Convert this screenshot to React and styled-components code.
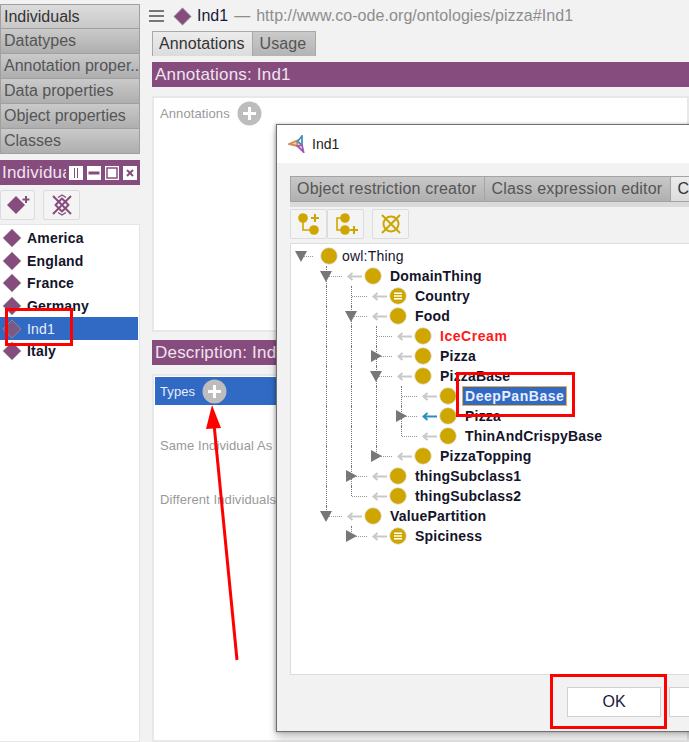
import styled, { createGlobalStyle } from 'styled-components';

const PURPLE = '#864c7e';
const GOLD = '#cfa600';
const BLUE = '#316ac5';

const GlobalStyle = createGlobalStyle`
  html, body {
    margin: 0;
    padding: 0;
    height: 742px;
    overflow: hidden;
    background: #f2f2f2;
    font-family: "Liberation Sans", Arial, sans-serif;
  }
`;

const Page = styled.div`
  position: relative;
  display: grid;
  grid-template-columns: 140px 1fr;
  column-gap: 12px;
  width: 689px;
  height: 742px;
  overflow: hidden;
`;

const Sidebar = styled.div`
  display: flex;
  flex-direction: column;
  padding-top: 4px;
  min-width: 0;
`;

const ViewTab = styled.div`
  height: 25px;
  box-sizing: border-box;
  padding-left: 3px;
  border: 1px solid #a0a0a0;
  border-top-width: ${({ $first }) => ($first ? 1 : 0)}px;
  background: ${({ $active }) =>
    $active ? 'linear-gradient(#dcdcdc, #c8c8c8)' : 'linear-gradient(#cacaca, #aeaeae)'};
  color: ${({ $active }) => ($active ? '#333' : '#555')};
  font-size: 16px;
  line-height: 24px;
  white-space: nowrap;
`;

const HeaderBar = styled.div`
  display: flex;
  align-items: center;
  height: 25px;
  margin-top: ${({ $top }) => $top || 0}px;
  padding-left: 3px;
  background: ${PURPLE};
  color: #f0e4ee;
  font-size: 17px;
  letter-spacing: 0.2px;
  white-space: nowrap;
`;

const SideHeader = styled(HeaderBar)`
  padding-left: 2px;
`;

const ClippedTitle = styled.span`
  width: 64px;
  overflow: hidden;
  flex: none;
`;

const WindowIcons = styled.div`
  display: flex;
  gap: 4px;
  margin-left: 3px;
`;

const Toolbar = styled.div`
  display: flex;
  height: 30px;
  gap: ${({ $gap }) => $gap || 0}px;
  margin: ${({ $margin }) => $margin || '5px 0 4px'};
`;

const ToolButton = styled.div`
  display: flex;
  align-items: center;
  justify-content: center;
  width: ${({ $w }) => $w || 37}px;
  height: 30px;
  box-sizing: border-box;
  margin-left: ${({ $left }) => $left || 0}px;
  border: 1px solid #dcdcdc;
  border-radius: 2px;
  background: #f4f4f4;
`;

const IndividualList = styled.div`
  flex: 1;
  padding-top: 2px;
  background: #fff;
  border: 1px solid #e6e6e6;
  border-left: 0;
`;

const IndividualRow = styled.div`
  display: flex;
  align-items: center;
  gap: 5px;
  height: 22.6px;
  width: 138px;
  padding-left: 2px;
  box-sizing: border-box;
  background: ${({ $selected }) => ($selected ? BLUE : 'transparent')};
  color: ${({ $selected }) => ($selected ? '#e8eefb' : '#14142a')};
  font-size: 14px;
  letter-spacing: 0.2px;
  font-weight: ${({ $selected }) => ($selected ? 400 : 700)};
`;

const Main = styled.div`
  display: flex;
  flex-direction: column;
  min-width: 0;
`;

const TitleBar = styled.div`
  display: flex;
  align-items: center;
  height: 31px;
  margin-left: -3px;
  padding-top: 1px;
  box-sizing: border-box;
  white-space: nowrap;
  font-size: 16px;
`;

const Burger = styled.div`
  width: 15px;
  height: 12px;
  margin-right: 9px;
  border-top: 2px solid #777;
  border-bottom: 2px solid #777;
  box-sizing: border-box;
  &::after {
    content: '';
    display: block;
    height: 2px;
    margin-top: 3px;
    background: #777;
  }
`;

const TitleName = styled.span`
  color: #1a1a3a;
  margin-left: 5px;
`;

const TitleDash = styled.span`
  color: #8d8d8d;
  margin-left: 6px;
`;

const TitleIri = styled.span`
  color: #8d8d8d;
  margin-left: 6px;
  letter-spacing: 0.07px;
`;

const MainTabs = styled.div`
  display: flex;
  height: 25px;
  margin-bottom: 6px;
`;

const MainTab = styled.div`
  height: 25px;
  box-sizing: border-box;
  padding: ${({ $active }) => ($active ? '0 7px 0 6px' : '0 9px 0 7px')};
  border: 1px solid #a8a8a8;
  border-left-width: ${({ $active }) => ($active ? 1 : 0)}px;
  border-bottom: 0;
  background: ${({ $active }) =>
    $active ? 'linear-gradient(#ececec, #dcdcdc)' : 'linear-gradient(#cacaca, #b4b4b4)'};
  color: ${({ $active }) => ($active ? '#333' : '#555')};
  font-size: 16px;
  line-height: 24px;
  letter-spacing: 0.1px;
`;

const Panel = styled.div`
  flex: ${({ $grow }) => ($grow ? 1 : 'none')};
  height: ${({ $h }) => ($h ? `${$h}px` : 'auto')};
  box-sizing: border-box;
  margin-top: ${({ $top }) => $top}px;
  padding: 1px;
  background: #fff;
  border: 2px solid #e8e8e8;
  display: flex;
  flex-direction: column;
`;

const SectionRow = styled.div`
  display: flex;
  align-items: center;
  gap: 7px;
  flex: none;
  height: ${({ $h }) => $h}px;
  margin-bottom: ${({ $after }) => $after || 0}px;
  padding-left: 5px;
  background: ${({ $active }) => ($active ? BLUE : 'transparent')};
  color: ${({ $active }) => ($active ? '#e8eefb' : '#999')};
  font-size: 13px;
  letter-spacing: 0.1px;
  white-space: nowrap;
`;

const Dialog = styled.div`
  position: absolute;
  left: 276px;
  top: 124px;
  width: 440px;
  height: 608px;
  box-sizing: border-box;
  display: flex;
  flex-direction: column;
  background: #f2f2f2;
  border: 1px solid #707070;
  box-shadow: 0 6px 8px rgba(0, 0, 0, 0.22), -1px 0 3px rgba(0, 0, 0, 0.25);
`;

const DialogTitle = styled.div`
  display: flex;
  align-items: center;
  gap: 6px;
  height: 38px;
  padding-left: 11px;
  background: #fff;
  color: #222;
  font-size: 14px;
`;

const DialogBody = styled.div`
  flex: 1;
  display: flex;
  flex-direction: column;
  min-height: 0;
  padding: 13px 0 0 13px;
`;

const TabStrip = styled.div`
  display: flex;
  height: 31px;
  box-sizing: border-box;
  background: #dadada;
  padding-bottom: 5px;
`;

const DialogTab = styled.div`
  box-sizing: border-box;
  padding: 0 8px 0 6px;
  border: 1px solid #a4a4a4;
  border-left-width: ${({ $first }) => ($first ? 1 : 0)}px;
  background: ${({ $active }) =>
    $active ? 'linear-gradient(#ececec, #dcdcdc)' : 'linear-gradient(#c8c8c8, #b0b0b0)'};
  color: ${({ $active }) => ($active ? '#333' : '#555')};
  font-size: 16px;
  line-height: 24px;
  letter-spacing: 0.2px;
  white-space: nowrap;
`;

const TreeBox = styled.div`
  height: 432px;
  box-sizing: border-box;
  padding-top: 2px;
  background: #fff;
  border: 1px solid #dcdcdc;
  border-right: 0;
`;

const TreeRow = styled.div`
  display: flex;
  align-items: center;
  height: 20px;
  white-space: nowrap;
`;

const IndentCell = styled.div`
  flex: none;
  width: 25px;
  height: 20px;
  position: relative;
  &::before {
    content: '';
    display: ${({ $line }) => ($line ? 'block' : 'none')};
    position: absolute;
    left: 10px;
    top: 0;
    bottom: 0;
    border-left: 1px dotted #777;
  }
`;

const Elbow = styled.div`
  flex: none;
  width: ${({ $root }) => ($root ? 29 : 31)}px;
  height: 20px;
  position: relative;
  &::before {
    content: '';
    display: ${({ $root }) => ($root ? 'none' : 'block')};
    position: absolute;
    left: 10px;
    top: 0;
    height: ${({ $last }) => ($last ? '10px' : '20px')};
    border-left: 1px dotted #777;
  }
  &::after {
    content: '';
    position: absolute;
    left: 11px;
    top: 10px;
    width: ${({ $root }) => ($root ? 11 : 15)}px;
    border-top: 1px dotted #999;
  }
`;

const Triangle = styled.div`
  position: absolute;
  z-index: 1;
  width: 0;
  height: 0;
  ${({ $open }) =>
    $open
      ? `left: 4px; top: 5px; border-left: 6.5px solid transparent; border-right: 6.5px solid transparent; border-top: 11px solid #777;`
      : `left: 5px; top: 3.5px; border-top: 6.5px solid transparent; border-bottom: 6.5px solid transparent; border-left: 11px solid #777;`}
`;

const TreeLabel = styled.span`
  margin-left: ${({ $left }) => $left}px;
  padding: 0 ${({ $selected }) => ($selected ? '2px 0 2px' : 0)};
  border: 1px solid ${({ $selected }) => ($selected ? '#e8b04a' : 'transparent')};
  background: ${({ $selected }) => ($selected ? BLUE : 'transparent')};
  color: ${({ $selected, $color }) => ($selected ? '#e8eefb' : $color || '#14142a')};
  font-size: 14px;
  line-height: 18px;
  letter-spacing: ${({ $selected, $color }) => ($selected || $color ? 0.55 : 0.2)}px;
  font-weight: ${({ $plain }) => ($plain ? 400 : 700)};
`;

const DialogFooter = styled.div`
  display: flex;
  gap: 8px;
  padding: 12px 0 0 277px;
`;

const PushButton = styled.div`
  flex: none;
  width: 94px;
  height: 30px;
  box-sizing: border-box;
  border: 1px solid #d0d0d0;
  background: #fff;
  color: #1a1a3a;
  font-size: 16px;
  line-height: 28px;
  text-align: center;
`;

const RedBox = styled.div`
  position: absolute;
  left: ${({ $x }) => $x}px;
  top: ${({ $y }) => $y}px;
  width: ${({ $w }) => $w}px;
  height: ${({ $h }) => $h}px;
  box-sizing: border-box;
  border: 3px solid #ff0000;
`;

const ArrowSvg = styled.svg`
  position: absolute;
  left: 195px;
  top: 400px;
`;

const Diamond = ({ size = 18, faded }) => (
  <svg width={size} height={size} viewBox="0 0 18 18" style={{ flex: 'none' }}>
    <path d="M9 .8 17.2 9 9 17.2.8 9z" fill={faded ? '#7a5a84' : PURPLE} stroke={faded ? '#a08a8a' : '#aaa'} strokeWidth=".8" />
  </svg>
);

const PlusCircle = () => (
  <svg width="25" height="25" viewBox="0 0 25 25" style={{ flex: 'none' }}>
    <circle cx="12.5" cy="12.5" r="12" fill="#bdbdbd" />
    <path d="M12.5 6v13M6 12.5h13" stroke="#fff" strokeWidth="3" />
  </svg>
);

const WindowIcon = ({ children }) => (
  <svg width="14" height="14" viewBox="0 0 14 14" fill="none">
    <rect x="0" y="0" width="14" height="14" fill="#fff" />
    {children}
  </svg>
);

const ClassDot = ({ defined }) => (
  <svg width="18" height="18" viewBox="0 0 18 18" style={{ flex: 'none' }}>
    <circle cx="9" cy="9" r="8.3" fill={GOLD} stroke="#ddd" strokeWidth=".7" />
    {defined && <path d="M5 6.3h8M5 9h8M5 11.7h8" stroke="#fff" strokeWidth="1.5" />}
  </svg>
);

const LinkArrow = ({ color }) => (
  <svg width="15" height="9" viewBox="0 0 15 9" style={{ flex: 'none', marginRight: 2 }}>
    <path d="M15 4.5H3M5.5 1 1.5 4.5 5.5 8" fill="none" stroke={color || '#c9c9c9'} strokeWidth="2" />
  </svg>
);

const Logo = () => (
  <svg width="18" height="18" viewBox="0 0 18 18" fill="none" strokeWidth="1.8">
    <path d="M1 9 9 5.5 9.5 11z" stroke="#d98a55" fill="#f0c8a8" />
    <path d="M14 1 9.5 6.5 14 10z" stroke="#4a8db5" />
    <path d="M9.5 11 15.5 17 14 10z" stroke="#9a5ab0" />
  </svg>
);

const tree = [
  { label: 'owl:Thing', level: 0, open: true, plain: true, root: true, guides: [] },
  { label: 'DomainThing', level: 1, open: true, guides: [] },
  { label: 'Country', level: 2, defined: true, guides: [1] },
  { label: 'Food', level: 2, open: true, guides: [1] },
  { label: 'IceCream', level: 3, color: '#ff1a1a', guides: [1, 2] },
  { label: 'Pizza', level: 3, closed: true, guides: [1, 2] },
  { label: 'PizzaBase', level: 3, open: true, guides: [1, 2] },
  { label: 'DeepPanBase', level: 4, selected: true, guides: [1, 2, 3] },
  { label: 'Pizza', level: 4, closed: true, arrow: '#2a8ec0', guides: [1, 2, 3] },
  { label: 'ThinAndCrispyBase', level: 4, last: true, guides: [1, 2, 3] },
  { label: 'PizzaTopping', level: 3, closed: true, last: true, guides: [1, 2] },
  { label: 'thingSubclass1', level: 2, closed: true, guides: [1] },
  { label: 'thingSubclass2', level: 2, last: true, guides: [1] },
  { label: 'ValuePartition', level: 1, open: true, last: true, guides: [] },
  { label: 'Spiciness', level: 2, closed: true, defined: true, last: true, guides: [] },
];

const individuals = ['America', 'England', 'France', 'Germany', 'Ind1', 'Italy'];
const viewTabs = ['Individuals', 'Datatypes', 'Annotation proper..', 'Data properties', 'Object properties', 'Classes'];

export default function App() {
  return (
    <Page>
      <GlobalStyle />
      <Sidebar>
        {viewTabs.map((t, i) => (
          <ViewTab key={t} $first={i === 0} $active={i === 0}>{t}</ViewTab>
        ))}
        <SideHeader $top={6}>
          <ClippedTitle>Individuals</ClippedTitle>
          <WindowIcons>
            <WindowIcon><path d="M5.5 2v10M8.5 2v10" stroke={PURPLE} /></WindowIcon>
            <WindowIcon><path d="M1.5 5.5h11v3h-11z" fill={PURPLE} /></WindowIcon>
            <WindowIcon><rect x="2" y="2" width="10" height="10" stroke={PURPLE} strokeWidth="1.5" /></WindowIcon>
            <WindowIcon><path d="m4 4 6 6m0-6-6 6" stroke={PURPLE} strokeWidth="2" /></WindowIcon>
          </WindowIcons>
        </SideHeader>
        <Toolbar $gap={8}>
          <ToolButton $w={35}>
            <svg width="26" height="22" viewBox="0 0 26 22">
              <path d="M11 2 20 11 11 20 2 11z" fill={PURPLE} />
              <path d="M21 2v7M17.5 5.5h7" stroke={PURPLE} strokeWidth="2" />
            </svg>
          </ToolButton>
          <ToolButton>
            <svg width="22" height="22" viewBox="0 0 22 22" fill="none" stroke={PURPLE} strokeWidth="2">
              <path d="M11 4.5 17.5 11 11 17.5 4.5 11z" strokeLinejoin="round" />
              <path d="M2 2l18 18M20 2 2 20" />
              <path d="M7 3.5 11 1l4 2.5M7 18.5l4 2.5 4-2.5" strokeWidth="1.4" />
            </svg>
          </ToolButton>
        </Toolbar>
        <IndividualList>
          {individuals.map((name) => (
            <IndividualRow key={name} $selected={name === 'Ind1'}>
              <Diamond size={20} faded={name === 'Ind1'} />
              {name}
            </IndividualRow>
          ))}
        </IndividualList>
      </Sidebar>

      <Main>
        <TitleBar>
          <Burger />
          <Diamond size={19} />
          <TitleName>Ind1</TitleName>
          <TitleDash>—</TitleDash>
          <TitleIri>http://www.co-ode.org/ontologies/pizza#Ind1</TitleIri>
        </TitleBar>
        <MainTabs>
          <MainTab $active>Annotations</MainTab>
          <MainTab>Usage</MainTab>
        </MainTabs>
        <HeaderBar>Annotations: Ind1</HeaderBar>
        <Panel $top={9} $h={236}>
          <SectionRow $h={29}>Annotations <PlusCircle /></SectionRow>
        </Panel>
        <HeaderBar $top={8}>Description: Ind1</HeaderBar>
        <Panel $top={9} $grow>
          <SectionRow $active $h={28} $after={13}>Types <PlusCircle /></SectionRow>
          <SectionRow $h={54}>Same Individual As</SectionRow>
          <SectionRow $h={54}>Different Individuals</SectionRow>
        </Panel>
      </Main>

      <Dialog>
        <DialogTitle><Logo />Ind1</DialogTitle>
        <DialogBody>
          <TabStrip>
            <DialogTab $first>Object restriction creator</DialogTab>
            <DialogTab>Class expression editor</DialogTab>
            <DialogTab $active>Class hierarchy</DialogTab>
          </TabStrip>
          <Toolbar $margin="2px 0 4px">
            <ToolButton>
              <svg width="24" height="24" viewBox="0 0 24 24" fill={GOLD}>
                <circle cx="6" cy="6" r="4.8" />
                <circle cx="17" cy="18" r="4.8" />
                <path d="M6 8v10h8" fill="none" stroke={GOLD} strokeWidth="1.6" />
                <path d="M18 2v8M14 6h8" stroke={GOLD} strokeWidth="2" />
              </svg>
            </ToolButton>
            <ToolButton>
              <svg width="24" height="24" viewBox="0 0 24 24" fill={GOLD}>
                <circle cx="11" cy="6" r="4.8" />
                <circle cx="11" cy="18" r="4.8" />
                <path d="M8 6H3v12h5" fill="none" stroke={GOLD} strokeWidth="1.6" />
                <path d="M20 14v8M16 18h8" stroke={GOLD} strokeWidth="2" />
              </svg>
            </ToolButton>
            <ToolButton $left={8}>
              <svg width="24" height="24" viewBox="0 0 24 24" fill="none" stroke={GOLD} strokeWidth="2">
                <circle cx="12" cy="12" r="7.5" />
                <path d="M3 3l18 18M21 3 3 21" />
              </svg>
            </ToolButton>
          </Toolbar>
          <TreeBox>
            {tree.map((n, i) => (
              <TreeRow key={i}>
                {Array.from({ length: n.level }, (_, c) => (
                  <IndentCell key={c} $line={n.guides.includes(c)} />
                ))}
                <Elbow $root={n.root} $last={n.last}>
                  {n.open && <Triangle $open />}
                  {n.closed && <Triangle />}
                </Elbow>
                {!n.root && <LinkArrow color={n.arrow} />}
                <ClassDot defined={n.defined} />
                <TreeLabel
                  $left={n.root ? 3 : n.selected ? 5 : 7}
                  $plain={n.plain}
                  $color={n.color}
                  $selected={n.selected}
                >
                  {n.label}
                </TreeLabel>
              </TreeRow>
            ))}
          </TreeBox>
          <DialogFooter>
            <PushButton>OK</PushButton>
            <PushButton>Cancel</PushButton>
          </DialogFooter>
        </DialogBody>
      </Dialog>

      <RedBox $x={5} $y={308} $w={68} $h={38} />
      <RedBox $x={456} $y={372} $w={119} $h={45} />
      <RedBox $x={550} $y={674} $w={117} $h={55} />
      <ArrowSvg width="60" height="270" viewBox="0 0 60 270">
        <path d="M42 260 19 24" stroke="#ff0000" strokeWidth="3" fill="none" />
        <path d="M17 5 11 29 26 28z" fill="#ff0000" />
      </ArrowSvg>
    </Page>
  );
}
